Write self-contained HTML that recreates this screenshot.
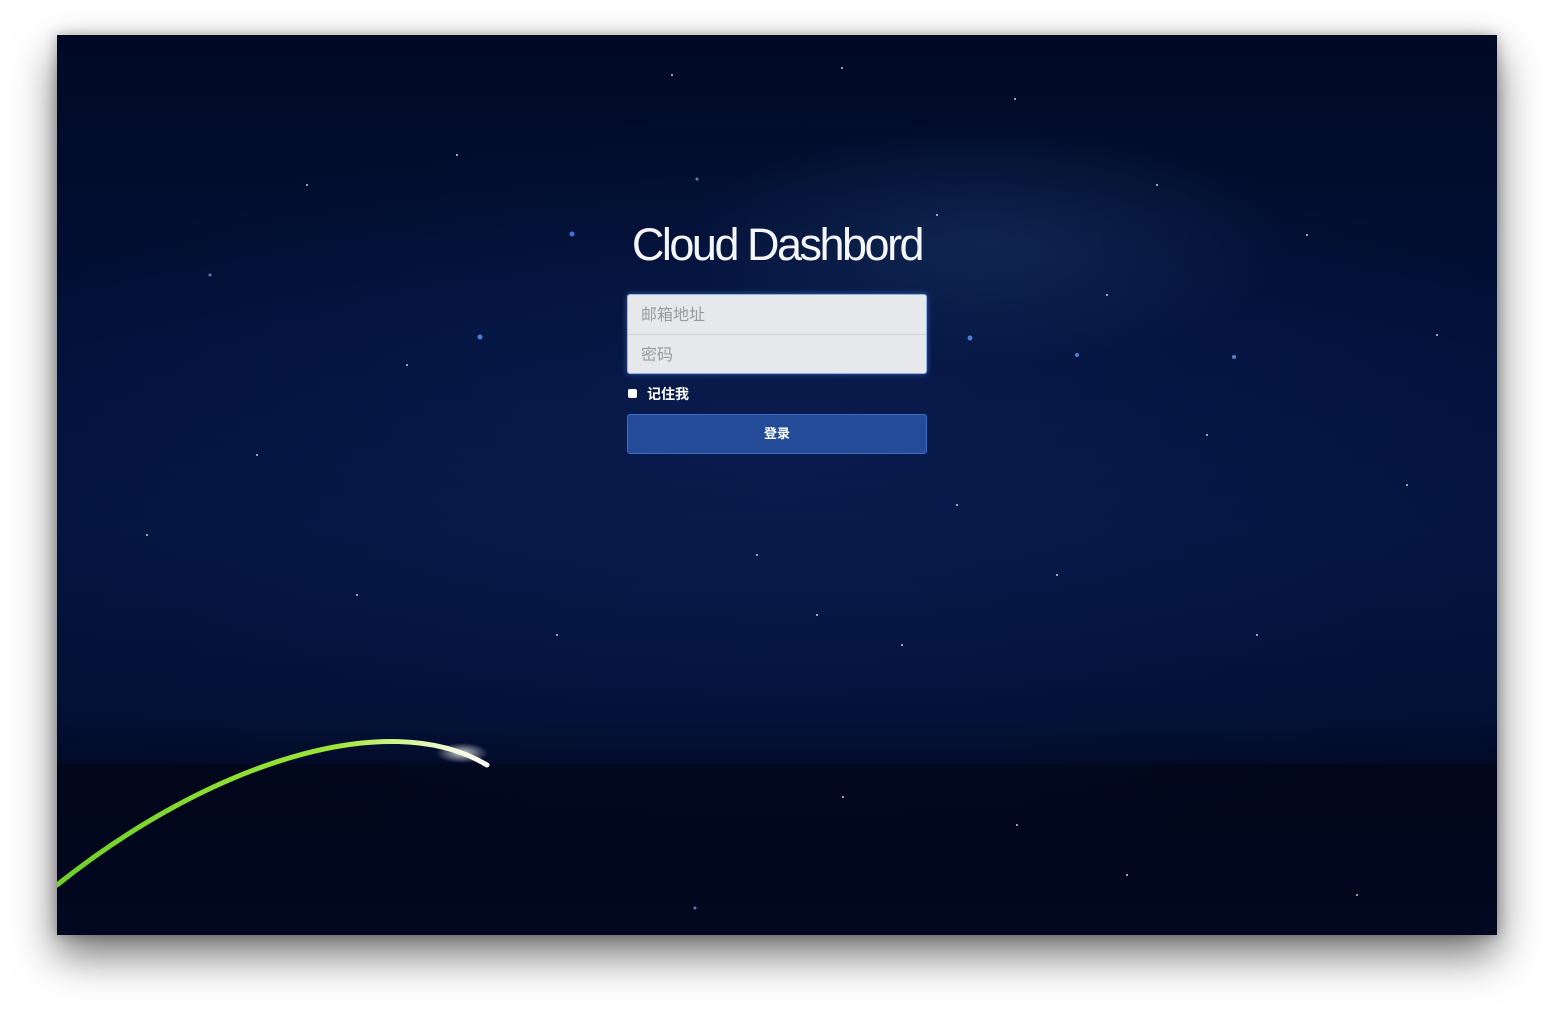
<!DOCTYPE html>
<html><head><meta charset="utf-8"><style>
html,body{margin:0;padding:0;width:1554px;height:1014px;background:#fff;overflow:hidden;font-family:"Liberation Sans","Noto Sans CJK SC",sans-serif}
#win{position:absolute;left:57px;top:35px;width:1440px;height:900px;overflow:hidden;
background:
radial-gradient(ellipse 300px 120px at 930px 210px,rgba(40,80,130,.3),transparent),
radial-gradient(ellipse 800px 300px at 720px 380px,rgba(15,40,100,.4),transparent),
radial-gradient(ellipse 900px 250px at 720px 560px,rgba(10,28,80,.35),transparent),
linear-gradient(#010a24 0%,#03113a 35%,#04143e 55%,#031034 76%,#020a26 80.9%,#010619 81.1%,#010820 100%);
box-shadow:0 20px 40px rgba(0,0,0,.55),0 0 12px rgba(0,0,0,.3)}
h1{position:absolute;left:520px;top:184px;width:400px;margin:0;text-align:center;color:#f4f6fa;font-weight:normal;font-size:45px;letter-spacing:-2.5px;white-space:nowrap;font-family:"Liberation Sans",sans-serif}
.box{position:absolute;left:570px;top:259px;width:298px;height:78px;background:#e7e8ec;border:1px solid #8fb4e8;border-radius:3px;box-shadow:0 0 6px rgba(100,160,255,.5)}
.box div{height:39px;line-height:41px;padding-left:13px;color:#9a9a9e;font-size:16px}
.box div+div{border-top:1px solid #d2d3d8}
.chk{position:absolute;left:571px;top:354px;width:9px;height:9px;background:#fff;border-radius:2px}
.rem{position:absolute;left:590px;top:349px;color:#fff;font-size:14px;font-weight:bold}
.btn{position:absolute;left:570px;top:379px;width:298px;height:38px;background:#244b97;border:1px solid #3a6cc0;border-radius:3px;color:#fff;text-align:center;line-height:38px;font-size:13px;font-weight:bold}
</style></head><body>
<div id="win">
<svg width="1440" height="900" style="position:absolute;left:0;top:0">
<defs><linearGradient id="g" x1="0" x2="1"><stop offset="0" stop-color="#6fcf2a"/><stop offset=".65" stop-color="#9fe63a"/><stop offset=".85" stop-color="#e2f7b0"/><stop offset="1" stop-color="#fff"/></linearGradient>
<radialGradient id="gl"><stop offset="0" stop-color="#fff" stop-opacity=".8"/><stop offset="1" stop-color="#fff" stop-opacity="0"/></radialGradient></defs>
<g fill="#fff" opacity=".8">
<circle cx="515" cy="199" r="2.5" fill="#4a8cff"/><circle cx="423" cy="302" r="2.5" fill="#5a9cff"/><circle cx="913" cy="303" r="2.5" fill="#5a9cff"/><circle cx="1020" cy="320" r="2" fill="#5a9cff"/><circle cx="1177" cy="322" r="2" fill="#5a9cff"/>
<circle cx="615" cy="40" r="1"/><circle cx="785" cy="33" r="1"/><circle cx="958" cy="64" r="1"/><circle cx="640" cy="144" r="1.5" fill="#6aa0d0"/><circle cx="153" cy="240" r="1.5" fill="#6aa0d0"/><circle cx="300" cy="560" r="1"/><circle cx="845" cy="610" r="1"/><circle cx="900" cy="470" r="1"/><circle cx="1100" cy="150" r="1"/><circle cx="1250" cy="200" r="1"/><circle cx="1350" cy="450" r="1"/><circle cx="200" cy="420" r="1"/><circle cx="400" cy="120" r="1"/><circle cx="700" cy="520" r="1"/><circle cx="1000" cy="540" r="1"/><circle cx="1200" cy="600" r="1"/><circle cx="500" cy="600" r="1"/><circle cx="786" cy="762" r="1"/><circle cx="960" cy="790" r="1"/><circle cx="638" cy="873" r="1.5" fill="#6aa0d0"/><circle cx="1070" cy="840" r="1"/><circle cx="1300" cy="860" r="1"/><circle cx="350" cy="330" r="1"/><circle cx="1150" cy="400" r="1"/><circle cx="760" cy="580" r="1"/><circle cx="880" cy="180" r="1"/><circle cx="1050" cy="260" r="1"/><circle cx="250" cy="150" r="1"/><circle cx="1380" cy="300" r="1"/><circle cx="90" cy="500" r="1"/>
</g>
<ellipse cx="405" cy="718" rx="26" ry="10" fill="url(#gl)"/>
<path d="M0 850 C150 730 330 670 430 730" fill="none" stroke="url(#g)" stroke-width="5" stroke-linecap="round"/>
</svg>
<h1>Cloud Dashbord</h1>
<div class="box"><div>邮箱地址</div><div>密码</div></div>
<div class="chk"></div><div class="rem">记住我</div>
<div class="btn">登录</div>
</div>
</body></html>
